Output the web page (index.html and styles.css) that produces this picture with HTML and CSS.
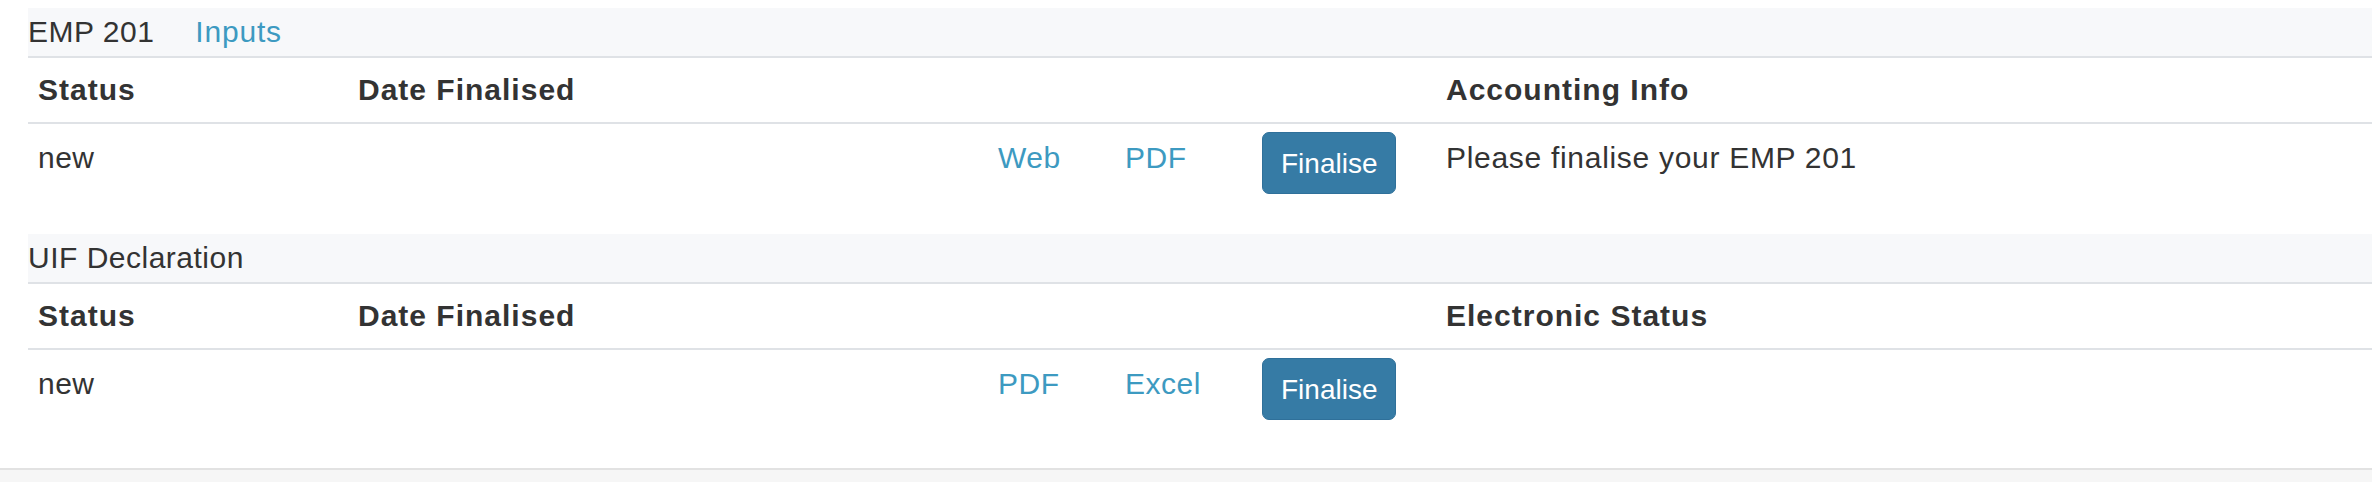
FILE: index.html
```html
<!DOCTYPE html>
<html lang="en">
<head>
<meta charset="utf-8">
<title>Returns</title>
<link rel="stylesheet" href="styles.css">
</head>
<body>
<main class="page">
  <section class="return">
    <div class="return-title">EMP 201<a class="title-link" href="#">Inputs</a></div>
    <table class="grid">
      <colgroup>
        <col class="c-status"><col class="c-date"><col class="c-l1"><col class="c-l2"><col class="c-btn"><col>
      </colgroup>
      <thead>
        <tr><th>Status</th><th>Date Finalised</th><th></th><th></th><th></th><th>Accounting Info</th></tr>
      </thead>
      <tbody>
        <tr>
          <td>new</td><td></td>
          <td><a href="#">Web</a></td>
          <td><a href="#">PDF</a></td>
          <td class="act"><button class="btn" type="button">Finalise</button></td>
          <td class="info">Please finalise your EMP 201</td>
        </tr>
      </tbody>
    </table>
  </section>
  <section class="return">
    <div class="return-title">UIF Declaration</div>
    <table class="grid">
      <colgroup>
        <col class="c-status"><col class="c-date"><col class="c-l1"><col class="c-l2"><col class="c-btn"><col>
      </colgroup>
      <thead>
        <tr><th>Status</th><th>Date Finalised</th><th></th><th></th><th></th><th>Electronic Status</th></tr>
      </thead>
      <tbody>
        <tr>
          <td>new</td><td></td>
          <td><a href="#">PDF</a></td>
          <td><a href="#">Excel</a></td>
          <td class="act"><button class="btn" type="button">Finalise</button></td>
          <td></td>
        </tr>
      </tbody>
    </table>
  </section>
</main>
<footer class="foot"></footer>
</body>
</html>
```

FILE: styles.css
```css
html, body {
  margin: 0;
  padding: 0;
  background: #ffffff;
}
body {
  font-family: "Liberation Sans", Arial, sans-serif;
  font-size: 30px;
  color: #333333;
  letter-spacing: 0.5px;
  min-height: 482px;
  display: flex;
  flex-direction: column;
}
.page {
  padding: 8px 0 0 28px;
}
.return {
  margin-bottom: 30px;
}
.return:last-child {
  margin-bottom: 38px;
}
.return-title {
  height: 48px;
  line-height: 48px;
  background: #f7f8fa;
  border-bottom: 2px solid #dfe2e6;
  white-space: nowrap;
}
.title-link {
  margin-left: 41px;
  letter-spacing: 0.8px;
}
a {
  color: #3d9ac1;
  text-decoration: none;
}
.grid {
  width: 100%;
  border-collapse: collapse;
  table-layout: fixed;
}
.c-status { width: 320px; }
.c-date { width: 640px; }
.c-l1 { width: 127px; }
.c-l2 { width: 137px; }
.c-btn { width: 184px; }
.grid th {
  text-align: left;
  font-weight: bold;
  letter-spacing: 1px;
  padding: 10px;
  line-height: 44px;
  height: 44px;
  border-bottom: 2px solid #dfe2e6;
  white-space: nowrap;
}
.grid td {
  padding: 10px;
  line-height: 48px;
  vertical-align: top;
  white-space: nowrap;
}
.grid td.info {
  letter-spacing: 0.7px;
}
.grid td.act {
  padding: 8px 10px 10px;
}
.btn {
  display: block;
  font-family: "Liberation Sans", Arial, sans-serif;
  font-size: 28px;
  letter-spacing: 0;
  line-height: 40px;
  padding: 11px 18px 9px;
  color: #ffffff;
  background: #367ba5;
  border: 1px solid #2f709a;
  border-radius: 7px;
  cursor: pointer;
}
.foot {
  flex: 1;
  background: #f6f6f6;
  border-top: 2px solid #e2e2e2;
}
```
